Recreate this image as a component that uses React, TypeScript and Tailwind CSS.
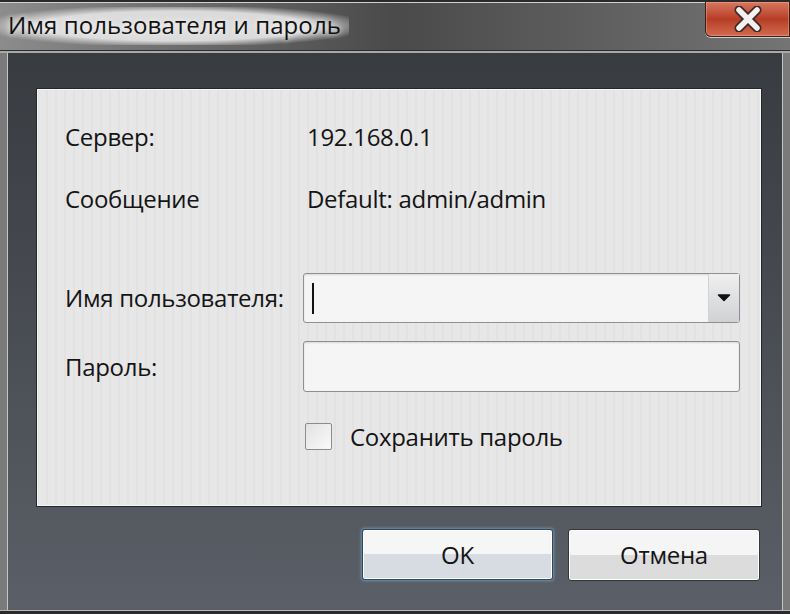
import React from 'react';

const font = "font-['Open_Sans','Noto_Sans',sans-serif]";

function CloseButton(): JSX.Element {
  return (
    <div className="flex h-[35px] w-[85px] items-center justify-center rounded-bl-[6px] border border-t-0 border-[#3a1f18] bg-gradient-to-b from-[#d9775f] via-[#b73d25] to-[#d06a4e] shadow-[0_1px_0_#cfcfcf,inset_0_0_0_1px_rgba(255,200,180,0.35)]">
      <svg width="34" height="26" viewBox="0 0 34 26">
        <path d="M8 4 L26 22 M26 4 L8 22" stroke="#3b2a26" strokeWidth="9" strokeLinecap="round" />
        <path d="M8 4 L26 22 M26 4 L8 22" stroke="#f4f0ee" strokeWidth="5.5" strokeLinecap="round" />
      </svg>
    </div>
  );
}

function TextRow({ label, value }: { label: string; value: string }): JSX.Element {
  return (
    <div className="grid h-[40px] grid-cols-[242px_1fr] items-center">
      <span>{label}</span>
      <span>{value}</span>
    </div>
  );
}

export default function App(): JSX.Element {
  return (
    <div className={`flex h-[614px] w-[790px] flex-col overflow-hidden bg-[#6e6e6e] text-[24px] font-medium tracking-[-0.3px] text-[#141414] ${font}`}>
      {/* title bar */}
      <div className="flex h-[50px] items-start justify-between border-t-[2px] border-[#2a2a2a] bg-gradient-to-r from-[#8c8c8c] via-[#4a4a4a] to-[#747474] shadow-[inset_0_1px_0_#d2d2d2]">
        <div className="flex h-full items-center">
          <span className="rounded-[14px] bg-[radial-gradient(ellipse_at_center,rgba(225,225,225,0.95)_55%,rgba(200,200,200,0)_80%)] px-[8px] pb-[2px] text-[24px] tracking-[0.1px] text-[#111] [text-shadow:0_0_6px_#fff]">
            Имя пользователя и пароль
          </span>
        </div>
        <CloseButton />
      </div>
      <div className="h-[1px] bg-[#2c2c2c]" />
      <div className="h-[2px] bg-[#a9a9a9]" />

      {/* window body */}
      <div className="flex flex-1">
        <div className="w-[8px] border-r border-[#c4c4c4] bg-[#7a7a7a]" />
        <div className="flex flex-1 flex-col bg-gradient-to-b from-[#383b40] to-[#5b6068] pl-[28px] pr-[20px] pt-[35px]">
          {/* content panel */}
          <div className="flex h-[419px] flex-col border border-[#24262a] bg-[#e7e7e7] bg-[image:repeating-linear-gradient(90deg,rgba(0,0,0,0.025)_0px,rgba(0,0,0,0.025)_2px,transparent_2px,transparent_9px)] pl-[28px] pr-[21px] pt-[28px] shadow-[inset_0_0_0_1px_#f6f6f6]">
            <TextRow label="Сервер:" value="192.168.0.1" />
            <div className="mt-[22px]">
              <TextRow label="Сообщение" value="Default: admin/admin" />
            </div>

            <div className="mt-[54px] grid h-[50px] grid-cols-[238px_1fr] items-center">
              <span className="whitespace-nowrap">Имя пользователя:</span>
              <div className="flex h-full items-stretch rounded-[3px] border border-[#8c9096] bg-[#f5f5f5] shadow-[inset_0_1px_2px_rgba(0,0,0,0.12)]">
                <div className="flex flex-1 items-center pl-[8px]">
                  <div className="h-[31px] w-[2px] bg-[#111]" />
                </div>
                <div className="flex w-[31px] items-center justify-center border-l border-[#d0d3d6] bg-gradient-to-b from-[#f0f0f0] to-[#cfd1d3]">
                  <svg width="14" height="10" viewBox="0 0 14 10">
                    <path d="M1.5 2 L7 7.5 L12.5 2 Z" fill="#111" stroke="#111" strokeWidth="1.5" strokeLinejoin="round" />
                  </svg>
                </div>
              </div>
            </div>

            <div className="mt-[18px] grid h-[51px] grid-cols-[238px_1fr] items-center">
              <span>Пароль:</span>
              <div className="h-full rounded-[3px] border border-[#8c9096] bg-[#f5f5f5] shadow-[inset_0_1px_2px_rgba(0,0,0,0.12)]" />
            </div>

            <div className="mt-[31px] flex h-[27px] items-center pl-[240px]">
              <div className="h-[27px] w-[27px] rounded-[2px] border border-[#8a8c8f] bg-gradient-to-br from-[#e2e2e2] to-[#fafafa]" />
              <span className="ml-[18px]">Сохранить пароль</span>
            </div>
          </div>

          {/* buttons */}
          <div className="mt-[22px] flex justify-end gap-[15px] pr-[2px]">
            <button className="h-[51px] w-[191px] rounded-[3px] border border-[#2f4a63] bg-gradient-to-b from-[#f6f6f6] from-50% to-[#d6dce2] to-50% text-[24px] text-[#141414] shadow-[0_0_3px_1px_rgba(140,200,240,0.5),inset_0_0_0_1px_#ffffff]">
              OK
            </button>
            <button className="h-[52px] w-[192px] rounded-[3px] border border-[#34373b] bg-gradient-to-b from-[#f5f5f5] from-50% to-[#dcdcdc] to-50% text-[24px] text-[#141414] shadow-[inset_0_0_0_1px_#ffffff]">
              Отмена
            </button>
          </div>
        </div>
        <div className="w-[8px] border-l border-[#c4c4c4] bg-[#7a7a7a]" />
      </div>

      <div className="h-[1px] bg-[#b8b8b8]" />
      <div className="h-[3px] bg-[#2a2a2a]" />
    </div>
  );
}
